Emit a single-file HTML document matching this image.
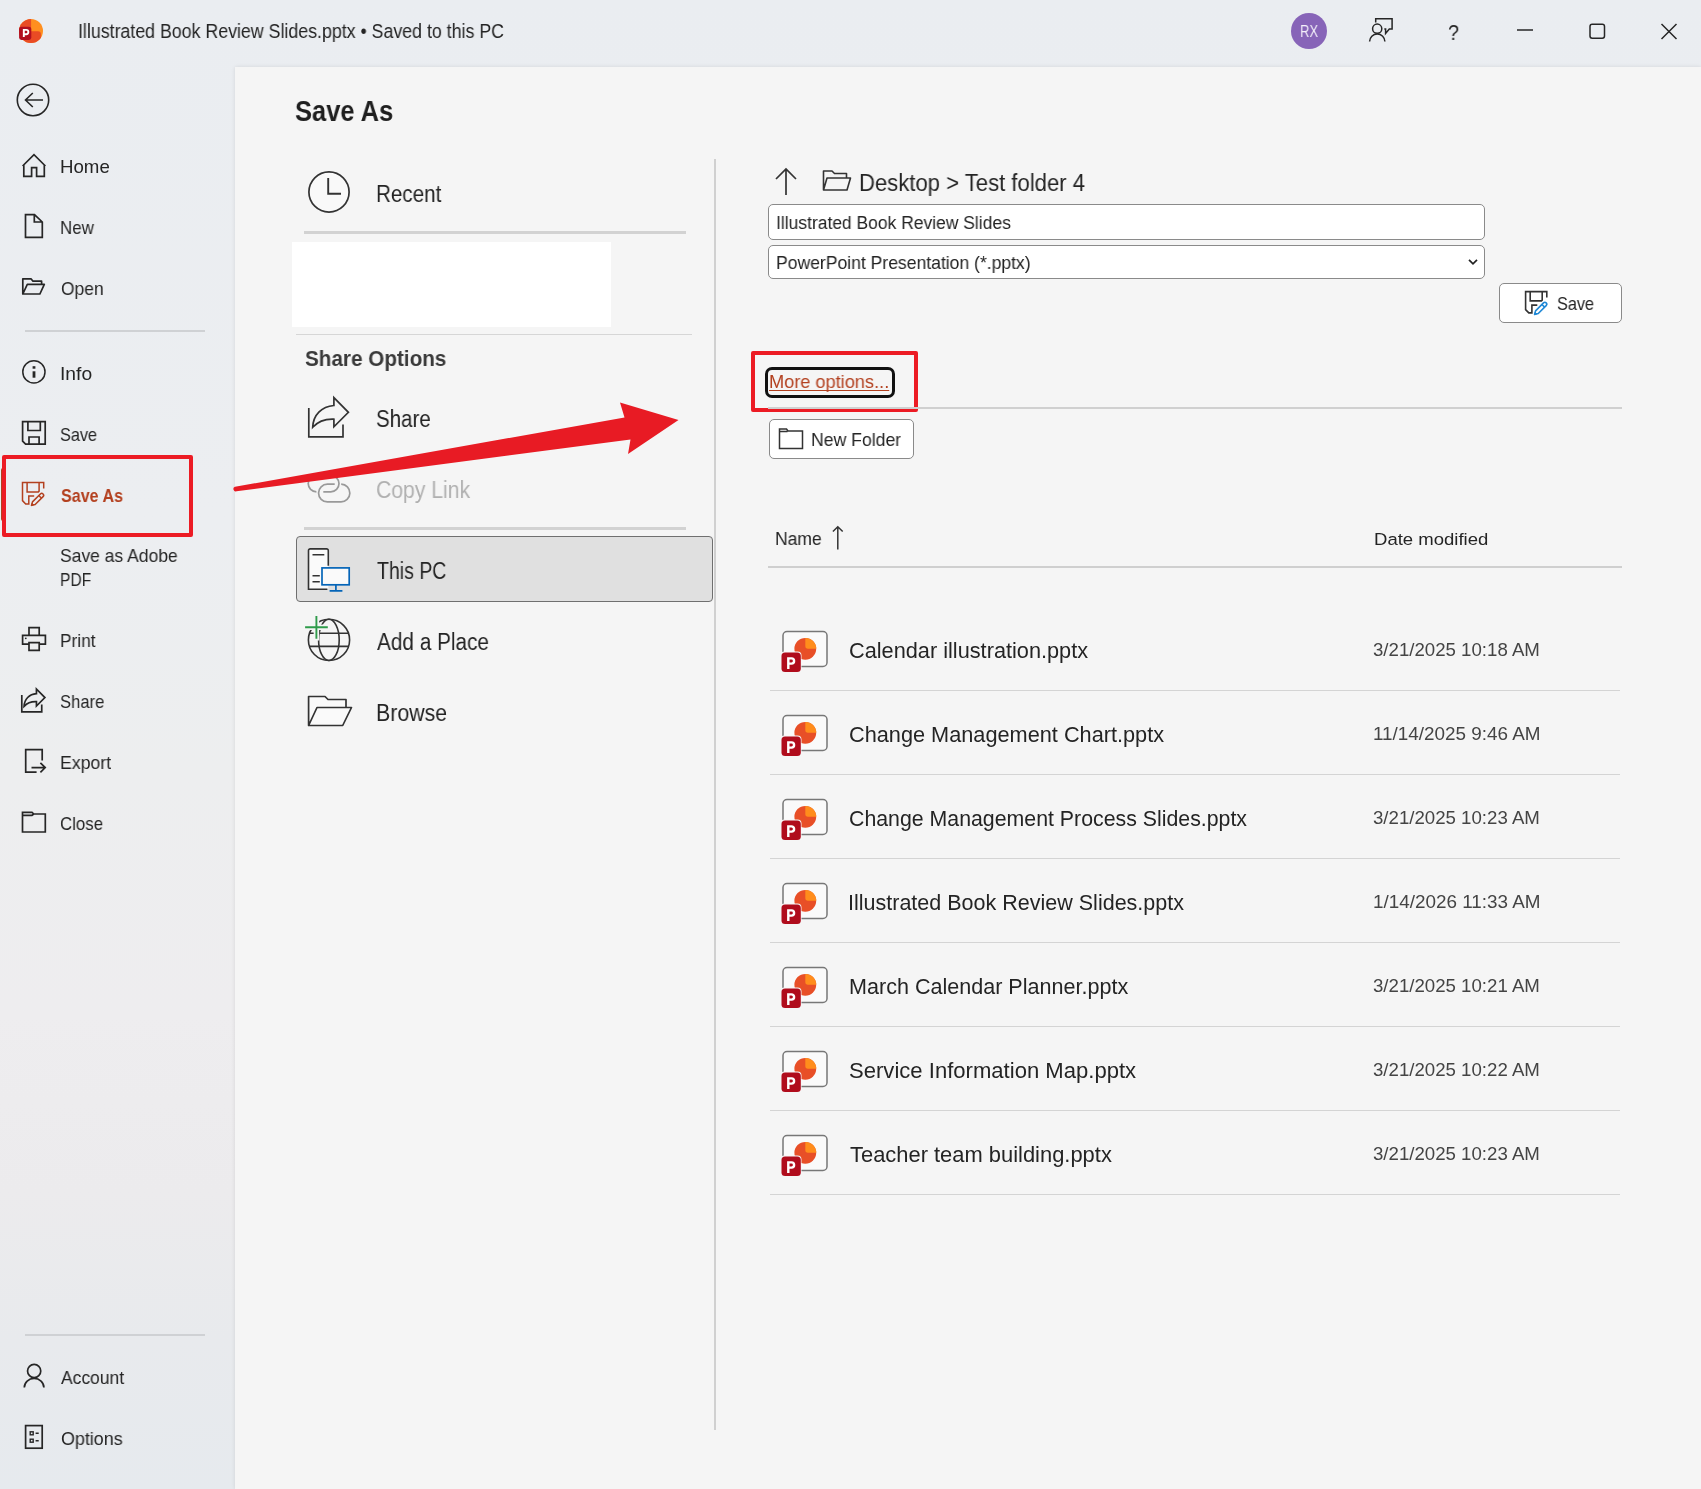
<!DOCTYPE html>
<html><head><meta charset="utf-8"><style>
html,body{margin:0;padding:0;width:1701px;height:1489px;overflow:hidden;background:#eceef1}
body{position:relative;font-family:"Liberation Sans", sans-serif}
.t{position:absolute;white-space:nowrap;line-height:1;transform-origin:0 0;will-change:transform}
.r{position:absolute}
.i{position:absolute;overflow:visible}
</style></head><body>
<div style="position:absolute;left:0;top:0;width:1701px;height:1489px;background:linear-gradient(180deg,#eaedf1 0%,#eceef1 35%,#edeeef 52%,#eeedef 68%,#ecebed 80%,#e8eaed 90%,#e6eaee 100%)"></div>
<div style="position:absolute;left:235px;top:67px;width:1466px;height:1422px;background:#f5f5f5;box-shadow:0 0 4px rgba(0,0,0,0.10)"></div>
<svg class="i" style="left:17px;top:17px;" width="28" height="28" viewBox="17 17 28 28">
<clipPath id="lc"><circle cx="31" cy="31" r="12"/></clipPath>
<g clip-path="url(#lc)">
<rect x="19" y="19" width="24" height="24" fill="#ff8f1f"/>
<path d="M17 17 H28.3 A2.8 2.8 0 0 1 31.1 19.8 V33 H17 Z" fill="#e94b24"/>
<path d="M17 31.2 H38 A2.9 2.9 0 0 1 40.9 34.1 V45 H17 Z" fill="#e94b24"/>
</g>
<rect x="19.1" y="26.7" width="12.2" height="13.2" rx="2.4" fill="#b10e1f"/>
<path d="M23.8 37 V29.9 H26.2 A2.15 2.15 0 0 1 26.2 34.2 H23.8" fill="none" stroke="#fff" stroke-width="1.9"/>
</svg>
<div style="position:absolute;left:1291px;top:13px;width:36px;height:36px;border-radius:50%;background:#8764b8"></div>
<svg class="i" style="left:1360px;top:12px;" width="40" height="36" viewBox="1360 12 40 36"><g fill="none" stroke="#262626" stroke-width="1.5"><path d="M1375.7 22.6 V18.8 H1392.1 V29 H1389.3 L1385.6 33.4 V29 H1384.3"/><circle cx="1377.2" cy="28.7" r="4.6"/><path d="M1369.6 41.6 A7.65 7.65 0 0 1 1384.9 41.6"/></g></svg>
<svg class="i" style="left:1510px;top:20px;" width="30" height="20" viewBox="1510 20 30 20"><path d="M1517 30 H1533" stroke="#262626" stroke-width="1.5"/></svg>
<svg class="i" style="left:1585px;top:20px;" width="25" height="24" viewBox="1585 20 25 24"><rect x="1590" y="24.2" width="14.5" height="14" rx="2.2" fill="none" stroke="#262626" stroke-width="1.5"/></svg>
<svg class="i" style="left:1655px;top:18px;" width="28" height="26" viewBox="1655 18 28 26"><path d="M1661.5 24 L1676.5 39 M1676.5 24 L1661.5 39" stroke="#262626" stroke-width="1.5"/></svg>
<svg class="i" style="left:14px;top:80px;" width="40" height="40" viewBox="14 80 40 40"><circle cx="33" cy="100" r="15.7" fill="none" stroke="#262626" stroke-width="1.6"/><path d="M43 100 H25.5 M32.8 93 L25.5 100 L32.8 107" fill="none" stroke="#262626" stroke-width="1.6"/></svg>
<svg class="i" style="left:18px;top:150px;" width="32" height="32" viewBox="18 150 32 32"><path d="M22.6 166 L34 154.6 L45.4 166 M23.8 164.5 V176.3 H31.6 V167.6 H36.6 V176.3 H44.3 V164.5" fill="none" stroke="#262626" stroke-width="1.7" stroke-linejoin="miter"/></svg>
<svg class="i" style="left:20px;top:210px;" width="28" height="32" viewBox="20 210 28 32"><path d="M25.5 214.6 H34.5 L42.3 222 V237.3 H25.5 Z M34.3 214.6 V222 H42.3" fill="none" stroke="#262626" stroke-width="1.7"/></svg>
<svg class="i" style="left:18px;top:274px;" width="32" height="26" viewBox="18 274 32 26"><path d="M22.8 294 V278.8 H31 L33 281.2 H41.6 V284.3 M22.8 294 L27.3 284.3 H44.3 L39.9 294 Z" fill="none" stroke="#262626" stroke-width="1.7" stroke-linejoin="round"/></svg>
<svg class="i" style="left:18px;top:356px;" width="32" height="32" viewBox="18 356 32 32"><circle cx="33.9" cy="371.9" r="11.1" fill="none" stroke="#262626" stroke-width="1.5"/><rect x="32.6" y="371.3" width="2.8" height="6.4" fill="#262626"/><rect x="32.6" y="366.2" width="2.8" height="2.5" fill="#262626"/></svg>
<svg class="i" style="left:18px;top:417px;" width="32" height="32" viewBox="18 417 32 32"><path d="M22.6 421.6 H45.2 V444.2 H25.6 L22.6 441.2 Z M27.9 421.6 V430.5 H40.3 V421.6 M29 444.2 V437 H39.1 V444.2" fill="none" stroke="#262626" stroke-width="1.7"/></svg>
<svg class="i" style="left:18px;top:478px;" width="32" height="32" viewBox="18 478 32 32"><g transform="translate(22.5 482.6)" fill="none" stroke-width="1.5"><path d="M21.2 6 V0 H0 V18 L3.2 21.3 H6.3 V13.5 H11.7 M4.6 0 V9.3 H15.8 L16.6 8.5 V0" stroke="#b3401f"/><g transform="translate(8.9 23) rotate(-45)"><path d="M0.2 -0.1 L3.4 -1.9 H14.6 A1.9 1.9 0 0 1 14.6 1.9 H3.4 Z" stroke="#b3401f" fill="none" stroke-linejoin="round"/><path d="M12.4 -1.9 V1.9" stroke="#b3401f"/><path d="M0 0 L2.2 -1.2 V1.2 Z" fill="#b3401f" stroke="#b3401f" stroke-width="0.8"/></g></g></svg>
<svg class="i" style="left:18px;top:622px;" width="32" height="34" viewBox="18 622 32 34"><path d="M29 635.3 V627.6 H39.2 V635.3 M29 644.1 H22.6 V635.3 H45.4 V644.1 H39.2 M29 642.6 H39.2 V650.3 H29 Z" fill="none" stroke="#262626" stroke-width="1.7"/><circle cx="25.8" cy="638.3" r="0.9" fill="#262626"/></svg>
<svg class="i" style="left:18px;top:684px;" width="32" height="32" viewBox="18 684 32 32"><g transform="translate(21.8 689) scale(0.583) translate(-308.8 -397.6)"><path d="M308.8 408 V436.9 H343 V424.4 M333.9 405.5 V397.6 L348.4 412.3 L333.9 426.8 V419.2 C325 418.8 318 421.5 312.7 427.3 C313.2 415 321.5 406.5 333.9 405.5 Z" fill="none" stroke="#262626" stroke-width="1.7" vector-effect="non-scaling-stroke"/></g></svg>
<svg class="i" style="left:18px;top:745px;" width="32" height="32" viewBox="18 745 32 32"><path d="M42.2 760.6 V749.6 H25.7 V772.2 H36.6 M31.5 767.6 H45.2 M40.4 762.9 L45.2 767.6 L40.4 772.3" fill="none" stroke="#262626" stroke-width="1.7"/></svg>
<svg class="i" style="left:18px;top:806px;" width="32" height="32" viewBox="18 806 32 32"><path d="M22.5 832 V812.3 H32 L33.8 814 H45.3 V832 Z M22.5 815.3 H32 L33.8 814" fill="none" stroke="#262626" stroke-width="1.7"/></svg>
<svg class="i" style="left:18px;top:1360px;" width="32" height="32" viewBox="18 1360 32 32"><circle cx="34.15" cy="1371.05" r="6.6" fill="none" stroke="#262626" stroke-width="1.7"/><path d="M24.3 1387.6 A9.8 9.2 0 0 1 43.9 1387.6" fill="none" stroke="#262626" stroke-width="1.7"/></svg>
<svg class="i" style="left:18px;top:1420px;" width="32" height="34" viewBox="18 1420 32 34"><rect x="25.6" y="1425.6" width="16.6" height="22.6" fill="none" stroke="#262626" stroke-width="1.7"/><rect x="30.2" y="1431.8" width="3" height="3" fill="none" stroke="#262626" stroke-width="1.4"/><rect x="30.2" y="1439.2" width="3" height="3" fill="none" stroke="#262626" stroke-width="1.4"/><path d="M35.6 1433.3 H38.7 M35.6 1440.7 H38.7" stroke="#262626" stroke-width="1.4"/></svg>
<div class="r" style="left:25px;top:330px;width:180px;height:2px;background:#cfd1d4"></div>
<div class="r" style="left:25px;top:1334px;width:180px;height:2px;background:#cfd1d4"></div>
<div class="r" style="left:1px;top:468px;width:4px;height:53px;background:#b3401f;border-radius:2px"></div>
<div class="r" style="left:2px;top:455px;width:183px;height:74px;border:4px solid #ec1b24;border-radius:2px"></div>
<svg class="i" style="left:300px;top:163px;" width="60" height="60" viewBox="300 163 60 60"><circle cx="329" cy="192" r="20.1" fill="#f9f9f9" stroke="#333" stroke-width="1.7"/><path d="M328.2 178 V193.8 H341" fill="none" stroke="#333" stroke-width="1.9"/></svg>
<div class="r" style="left:304px;top:231px;width:382px;height:3px;background:#d2d2d2"></div>
<div class="r" style="left:292px;top:242px;width:319px;height:85px;background:#ffffff"></div>
<div class="r" style="left:296px;top:334px;width:396px;height:1px;background:#d6d6d6"></div>
<svg class="i" style="left:300px;top:390px;" width="60" height="54" viewBox="300 390 60 54"><path d="M308.8 408 V436.9 H343 V424.4 M333.9 405.5 V397.6 L348.4 412.3 L333.9 426.8 V419.2 C325 418.8 318 421.5 312.7 427.3 C313.2 415 321.5 406.5 333.9 405.5 Z" fill="none" stroke="#333" stroke-width="1.7" stroke-linejoin="miter"/></svg>
<svg class="i" style="left:300px;top:470px;" width="60" height="40" viewBox="300 470 60 40"><g fill="none" stroke="#999" stroke-width="1.7"><path d="M323.3 491.8 H330.8 A8.2 8.2 0 0 0 330.8 475.4 H316.4 A8.2 8.2 0 0 0 316.4 491.8"/><path d="M341.2 484.2 A8.85 8.85 0 0 1 340.8 501.9 H327.4 A8.85 8.85 0 0 1 327.4 484.2 H334.7"/></g></svg>
<div class="r" style="left:304px;top:526.5px;width:382px;height:3px;background:#d2d2d2"></div>
<div class="r" style="left:296.3px;top:536.2px;width:416.5px;height:65.5px;box-sizing:border-box;background:#e0e0e0;border:1px solid #6f6f6f;border-radius:4px"></div>
<svg class="i" style="left:300px;top:540px;" width="60" height="60" viewBox="300 540 60 60"><rect x="308.5" y="548.9" width="19.8" height="40.3" fill="#fafafa"/><path d="M328.3 565.8 V550.6 A1.7 1.7 0 0 0 326.6 548.9 H310.2 A1.7 1.7 0 0 0 308.5 550.6 V589.2 H327.4" fill="none" stroke="#333" stroke-width="1.6"/><path d="M312.5 554.7 H324.3 M312.5 575.7 H319.8 M312.5 581.7 H319.8" stroke="#333" stroke-width="1.5"/><rect x="322" y="567.9" width="27.2" height="16.9" fill="#fafafa" stroke="#0565b8" stroke-width="1.7"/><path d="M335.9 584.8 V590.8 M329.6 590.8 H342.4" stroke="#0565b8" stroke-width="1.7"/></svg>
<svg class="i" style="left:300px;top:612px;" width="60" height="54" viewBox="300 612 60 54"><g fill="none" stroke="#333" stroke-width="1.6"><circle cx="329" cy="639.9" r="20.6"/><ellipse cx="328.9" cy="639.9" rx="10.3" ry="20.6"/><path d="M309.5 633.3 H348.5 M309.5 646.4 H348.5"/></g><path d="M316.4 614.5 V640.5 M303 627.2 H330" stroke="#f5f5f5" stroke-width="5.5"/><path d="M316.4 616.1 V638.7 M305.1 627.2 H327.8" stroke="#2e9b4a" stroke-width="1.9"/></svg>
<svg class="i" style="left:300px;top:690px;" width="60" height="40" viewBox="300 690 60 40"><path d="M308.6 725.5 V696.5 H325 L328 699.5 H346 V707.5 H316.5 Z" fill="#fafafa" stroke="none"/><path d="M308.6 725.5 V696.5 H325 L328 699.5 H346 V707 M308.6 725.5 L317 707.5 H351.5 L342.7 725.5 Z" fill="#fafafa" stroke="#333" stroke-width="1.7" stroke-linejoin="round"/></svg>
<div class="r" style="left:714px;top:159px;width:2px;height:1271px;background:#d0d0d0"></div>
<svg class="i" style="left:770px;top:162px;" width="32" height="36" viewBox="770 162 32 36"><path d="M786 195 V169 M776 179 L786 169 L796 179" fill="none" stroke="#333" stroke-width="1.7"/></svg>
<svg class="i" style="left:818px;top:166px;" width="38" height="28" viewBox="818 166 38 28"><path d="M823.5 190 V171 H832 L834.5 173.5 H846.5 V178 M823.5 190 L827 178 H850.5 L847 190 Z" fill="none" stroke="#333" stroke-width="1.6" stroke-linejoin="round"/></svg>
<div class="r" style="left:768px;top:203.5px;width:717px;height:36.5px;background:#fff;border:1px solid #8a8a8a;border-radius:5px;box-sizing:border-box"></div>
<div class="r" style="left:768px;top:245px;width:717px;height:33.5px;background:#fff;border:1px solid #8a8a8a;border-radius:5px;box-sizing:border-box"></div>
<svg class="i" style="left:1465px;top:255px;" width="16" height="14" viewBox="1465 255 16 14"><path d="M1469 259.8 L1473 263.8 L1477 259.8" fill="none" stroke="#222" stroke-width="1.7"/></svg>
<div class="r" style="left:1499px;top:283px;width:123px;height:40px;background:#fff;border:1px solid #8a8a8a;border-radius:5px;box-sizing:border-box"></div>
<svg class="i" style="left:1520px;top:286px;" width="36" height="34" viewBox="1520 286 36 34"><g transform="translate(1525.6 291.6)" fill="none" stroke-width="1.6"><path d="M21.2 6 V0 H0 V18 L3.2 21.3 H6.3 V13.5 H11.7 M4.6 0 V9.3 H15.8 L16.6 8.5 V0" stroke="#333"/><g transform="translate(8.9 23) rotate(-45)"><path d="M0.2 -0.1 L3.4 -1.9 H14.6 A1.9 1.9 0 0 1 14.6 1.9 H3.4 Z" stroke="#1f88d6" fill="#ffffff" stroke-linejoin="round"/><path d="M12.4 -1.9 V1.9" stroke="#1f88d6"/><path d="M0 0 L2.2 -1.2 V1.2 Z" fill="#1f88d6" stroke="#1f88d6" stroke-width="0.8"/></g></g></svg>
<div class="r" style="left:751px;top:351px;width:167px;height:61px;border:4px solid #ec1b24;box-sizing:border-box;border-radius:2px"></div>
<div class="r" style="left:765px;top:367px;width:130px;height:30.5px;border:3px solid #111;box-sizing:border-box;border-radius:7px"></div>
<div class="r" style="left:768px;top:406.5px;width:854px;height:2px;background:#d0d0d0"></div>
<div class="r" style="left:768.5px;top:419px;width:145px;height:39.5px;background:#fff;border:1px solid #8a8a8a;border-radius:5px;box-sizing:border-box"></div>
<svg class="i" style="left:775px;top:424px;" width="32" height="30" viewBox="775 424 32 30"><path d="M779.5 448.5 V429 H786.5 L788 431 H802.5 V448.5 Z M779.5 431.5 H787.5" fill="none" stroke="#333" stroke-width="1.5"/></svg>
<svg class="i" style="left:830px;top:525px;" width="16" height="28" viewBox="830 525 16 28"><path d="M837.8 549.5 V526.8 M832.9 531.5 L837.8 526.8 L842.7 531.5" fill="none" stroke="#333" stroke-width="1.5"/></svg>
<div class="r" style="left:768px;top:565.5px;width:854px;height:2px;background:#cfcfcf"></div>
<svg class="i" style="left:778px;top:627px;" width="54" height="48" viewBox="778 627 54 48"><rect x="783" y="631.5" width="44" height="35" rx="4" fill="#fafafa" stroke="#777" stroke-width="1.5"/><circle cx="805.3" cy="648.8" r="10.9" fill="#e84f27"/><path d="M805.3 637.9 A10.9 10.9 0 0 1 816.2 648.8 H808 A2.7 2.7 0 0 1 805.3 646.1 Z" fill="#ff8d1c"/><rect x="780.5" y="651.5" width="21" height="21" rx="4" fill="#f5f5f5"/><rect x="781.5" y="652.5" width="19.3" height="19.6" rx="3.6" fill="#b00c1c"/><path d="M788.3 669 V658.4 H791.5 A2.6 2.6 0 0 1 791.5 663.6 H788.3" fill="none" stroke="#fff" stroke-width="2.4"/></svg>
<div class="r" style="left:770px;top:690px;width:850px;height:1px;background:#d4d4d4"></div>
<svg class="i" style="left:778px;top:711px;" width="54" height="48" viewBox="778 711 54 48"><rect x="783" y="715.5" width="44" height="35" rx="4" fill="#fafafa" stroke="#777" stroke-width="1.5"/><circle cx="805.3" cy="732.8" r="10.9" fill="#e84f27"/><path d="M805.3 721.9 A10.9 10.9 0 0 1 816.2 732.8 H808 A2.7 2.7 0 0 1 805.3 730.1 Z" fill="#ff8d1c"/><rect x="780.5" y="735.5" width="21" height="21" rx="4" fill="#f5f5f5"/><rect x="781.5" y="736.5" width="19.3" height="19.6" rx="3.6" fill="#b00c1c"/><path d="M788.3 753 V742.4 H791.5 A2.6 2.6 0 0 1 791.5 747.6 H788.3" fill="none" stroke="#fff" stroke-width="2.4"/></svg>
<div class="r" style="left:770px;top:774px;width:850px;height:1px;background:#d4d4d4"></div>
<svg class="i" style="left:778px;top:795px;" width="54" height="48" viewBox="778 795 54 48"><rect x="783" y="799.5" width="44" height="35" rx="4" fill="#fafafa" stroke="#777" stroke-width="1.5"/><circle cx="805.3" cy="816.8" r="10.9" fill="#e84f27"/><path d="M805.3 805.9 A10.9 10.9 0 0 1 816.2 816.8 H808 A2.7 2.7 0 0 1 805.3 814.1 Z" fill="#ff8d1c"/><rect x="780.5" y="819.5" width="21" height="21" rx="4" fill="#f5f5f5"/><rect x="781.5" y="820.5" width="19.3" height="19.6" rx="3.6" fill="#b00c1c"/><path d="M788.3 837 V826.4 H791.5 A2.6 2.6 0 0 1 791.5 831.6 H788.3" fill="none" stroke="#fff" stroke-width="2.4"/></svg>
<div class="r" style="left:770px;top:858px;width:850px;height:1px;background:#d4d4d4"></div>
<svg class="i" style="left:778px;top:879px;" width="54" height="48" viewBox="778 879 54 48"><rect x="783" y="883.5" width="44" height="35" rx="4" fill="#fafafa" stroke="#777" stroke-width="1.5"/><circle cx="805.3" cy="900.8" r="10.9" fill="#e84f27"/><path d="M805.3 889.9 A10.9 10.9 0 0 1 816.2 900.8 H808 A2.7 2.7 0 0 1 805.3 898.1 Z" fill="#ff8d1c"/><rect x="780.5" y="903.5" width="21" height="21" rx="4" fill="#f5f5f5"/><rect x="781.5" y="904.5" width="19.3" height="19.6" rx="3.6" fill="#b00c1c"/><path d="M788.3 921 V910.4 H791.5 A2.6 2.6 0 0 1 791.5 915.6 H788.3" fill="none" stroke="#fff" stroke-width="2.4"/></svg>
<div class="r" style="left:770px;top:942px;width:850px;height:1px;background:#d4d4d4"></div>
<svg class="i" style="left:778px;top:963px;" width="54" height="48" viewBox="778 963 54 48"><rect x="783" y="967.5" width="44" height="35" rx="4" fill="#fafafa" stroke="#777" stroke-width="1.5"/><circle cx="805.3" cy="984.8" r="10.9" fill="#e84f27"/><path d="M805.3 973.9 A10.9 10.9 0 0 1 816.2 984.8 H808 A2.7 2.7 0 0 1 805.3 982.1 Z" fill="#ff8d1c"/><rect x="780.5" y="987.5" width="21" height="21" rx="4" fill="#f5f5f5"/><rect x="781.5" y="988.5" width="19.3" height="19.6" rx="3.6" fill="#b00c1c"/><path d="M788.3 1005 V994.4 H791.5 A2.6 2.6 0 0 1 791.5 999.6 H788.3" fill="none" stroke="#fff" stroke-width="2.4"/></svg>
<div class="r" style="left:770px;top:1026px;width:850px;height:1px;background:#d4d4d4"></div>
<svg class="i" style="left:778px;top:1047px;" width="54" height="48" viewBox="778 1047 54 48"><rect x="783" y="1051.5" width="44" height="35" rx="4" fill="#fafafa" stroke="#777" stroke-width="1.5"/><circle cx="805.3" cy="1068.8" r="10.9" fill="#e84f27"/><path d="M805.3 1057.9 A10.9 10.9 0 0 1 816.2 1068.8 H808 A2.7 2.7 0 0 1 805.3 1066.1 Z" fill="#ff8d1c"/><rect x="780.5" y="1071.5" width="21" height="21" rx="4" fill="#f5f5f5"/><rect x="781.5" y="1072.5" width="19.3" height="19.6" rx="3.6" fill="#b00c1c"/><path d="M788.3 1089 V1078.4 H791.5 A2.6 2.6 0 0 1 791.5 1083.6 H788.3" fill="none" stroke="#fff" stroke-width="2.4"/></svg>
<div class="r" style="left:770px;top:1110px;width:850px;height:1px;background:#d4d4d4"></div>
<svg class="i" style="left:778px;top:1131px;" width="54" height="48" viewBox="778 1131 54 48"><rect x="783" y="1135.5" width="44" height="35" rx="4" fill="#fafafa" stroke="#777" stroke-width="1.5"/><circle cx="805.3" cy="1152.8" r="10.9" fill="#e84f27"/><path d="M805.3 1141.9 A10.9 10.9 0 0 1 816.2 1152.8 H808 A2.7 2.7 0 0 1 805.3 1150.1 Z" fill="#ff8d1c"/><rect x="780.5" y="1155.5" width="21" height="21" rx="4" fill="#f5f5f5"/><rect x="781.5" y="1156.5" width="19.3" height="19.6" rx="3.6" fill="#b00c1c"/><path d="M788.3 1173 V1162.4 H791.5 A2.6 2.6 0 0 1 791.5 1167.6 H788.3" fill="none" stroke="#fff" stroke-width="2.4"/></svg>
<div class="r" style="left:770px;top:1194px;width:850px;height:1px;background:#d4d4d4"></div>
<svg class="i" style="left:0;top:0" width="1701" height="1489"><path d="M235 486.8 L624.5 417.5 L620 402.6 L678.5 420 L628 454 L630.5 439.5 L236.5 491.2 A2.2 2.2 0 0 1 235 486.8 Z" fill="#e81b24"/></svg>
<div class="t" id="title" style="left:78.00px;top:22.36px;font-size:19.3px;font-weight:400;color:#242424;transform:scaleX(0.9216);">Illustrated Book Review Slides.pptx • Saved to this PC</div>
<div class="t" id="rx" style="left:1299.80px;top:24.02px;font-size:15.92px;font-weight:400;color:#f4f0fa;transform:scaleX(0.8200);">RX</div>
<div class="t" id="home" style="left:60.00px;top:158.08px;font-size:18.34px;font-weight:400;color:#242424;transform:scaleX(1.0181);">Home</div>
<div class="t" id="new" style="left:60.00px;top:219.18px;font-size:18.34px;font-weight:400;color:#242424;transform:scaleX(0.9232);">New</div>
<div class="t" id="open" style="left:61.00px;top:279.98px;font-size:18.34px;font-weight:400;color:#242424;transform:scaleX(0.9489);">Open</div>
<div class="t" id="info" style="left:60.00px;top:365.18px;font-size:18.34px;font-weight:400;color:#242424;transform:scaleX(1.0496);">Info</div>
<div class="t" id="save" style="left:60.00px;top:425.68px;font-size:18.34px;font-weight:400;color:#242424;transform:scaleX(0.8864);">Save</div>
<div class="t" id="saveas" style="left:61.00px;top:486.98px;font-size:18.34px;font-weight:700;color:#b3401f;transform:scaleX(0.8777);">Save As</div>
<div class="t" id="adobe" style="left:60.00px;top:546.58px;font-size:18.34px;font-weight:400;color:#242424;transform:scaleX(0.9549);">Save as Adobe</div>
<div class="t" id="pdf" style="left:60.00px;top:570.98px;font-size:18.34px;font-weight:400;color:#242424;transform:scaleX(0.8500);">PDF</div>
<div class="t" id="print" style="left:60.00px;top:632.18px;font-size:18.34px;font-weight:400;color:#242424;transform:scaleX(0.9438);">Print</div>
<div class="t" id="share" style="left:60.00px;top:693.28px;font-size:18.34px;font-weight:400;color:#242424;transform:scaleX(0.9063);">Share</div>
<div class="t" id="export" style="left:60.00px;top:753.98px;font-size:18.34px;font-weight:400;color:#242424;transform:scaleX(0.9645);">Export</div>
<div class="t" id="close" style="left:60.00px;top:815.18px;font-size:18.34px;font-weight:400;color:#242424;transform:scaleX(0.9182);">Close</div>
<div class="t" id="account" style="left:61.00px;top:1368.78px;font-size:18.34px;font-weight:400;color:#242424;transform:scaleX(0.9515);">Account</div>
<div class="t" id="options" style="left:61.00px;top:1429.58px;font-size:18.34px;font-weight:400;color:#242424;transform:scaleX(0.9764);">Options</div>
<div class="t" id="h1" style="left:295.00px;top:96.99px;font-size:28.95px;font-weight:700;color:#1f1f1f;transform:scaleX(0.8802);">Save As</div>
<div class="t" id="recent" style="left:375.50px;top:182.50px;font-size:23.16px;font-weight:400;color:#242424;transform:scaleX(0.8902);">Recent</div>
<div class="t" id="shareopts" style="left:304.50px;top:346.90px;font-size:22.68px;font-weight:700;color:#3a3a3a;transform:scaleX(0.9123);">Share Options</div>
<div class="t" id="share2" style="left:375.50px;top:408.20px;font-size:23.16px;font-weight:400;color:#242424;transform:scaleX(0.8853);">Share</div>
<div class="t" id="copylink" style="left:375.50px;top:479.30px;font-size:23.16px;font-weight:400;color:#b0b0b0;transform:scaleX(0.9134);">Copy Link</div>
<div class="t" id="thispc" style="left:376.50px;top:559.90px;font-size:23.16px;font-weight:400;color:#242424;transform:scaleX(0.8426);">This PC</div>
<div class="t" id="addplace" style="left:376.50px;top:630.90px;font-size:23.16px;font-weight:400;color:#242424;transform:scaleX(0.8964);">Add a Place</div>
<div class="t" id="browse" style="left:375.50px;top:701.50px;font-size:23.16px;font-weight:400;color:#242424;transform:scaleX(0.9213);">Browse</div>
<div class="t" id="path" style="left:858.90px;top:171.50px;font-size:23.16px;font-weight:400;color:#242424;transform:scaleX(0.9532);">Desktop > Test folder 4</div>
<div class="t" id="fname" style="left:775.50px;top:214.37px;font-size:18.82px;font-weight:400;color:#242424;transform:scaleX(0.9280);">Illustrated Book Review Slides</div>
<div class="t" id="ftype" style="left:775.50px;top:253.98px;font-size:18.34px;font-weight:400;color:#242424;transform:scaleX(0.9577);">PowerPoint Presentation (*.pptx)</div>
<div class="t" id="savebtn" style="left:1557.00px;top:295.18px;font-size:18.34px;font-weight:400;color:#242424;transform:scaleX(0.8864);">Save</div>
<div class="t" id="more" style="left:768.50px;top:372.98px;font-size:18.34px;font-weight:400;color:#b3401f;transform:scaleX(0.9915);text-decoration:underline;text-underline-offset:2px;text-decoration-thickness:1.2px;text-decoration-skip-ink:none;">More options...</div>
<div class="t" id="newfolder" style="left:811.10px;top:430.98px;font-size:18.34px;font-weight:400;color:#242424;transform:scaleX(0.9616);">New Folder</div>
<div class="t" id="hname" style="left:775.20px;top:530.42px;font-size:18.05px;font-weight:400;color:#242424;transform:scaleX(0.9710);">Name</div>
<div class="t" id="hdate" style="left:1373.50px;top:530.80px;font-size:17.37px;font-weight:400;color:#242424;transform:scaleX(1.0669);">Date modified</div>
<div class="t" id="f0" style="left:849.10px;top:640.33px;font-size:21.23px;font-weight:400;color:#242424;transform:scaleX(1.0238);">Calendar illustration.pptx</div>
<div class="t" id="d0" style="left:1373.10px;top:641.28px;font-size:18.34px;font-weight:400;color:#444444;transform:scaleX(1.0171);">3/21/2025 10:18 AM</div>
<div class="t" id="f1" style="left:849.10px;top:724.33px;font-size:21.23px;font-weight:400;color:#242424;transform:scaleX(1.0234);">Change Management Chart.pptx</div>
<div class="t" id="d1" style="left:1373.10px;top:725.28px;font-size:18.34px;font-weight:400;color:#444444;transform:scaleX(1.0290);">11/14/2025 9:46 AM</div>
<div class="t" id="f2" style="left:849.10px;top:808.33px;font-size:21.23px;font-weight:400;color:#242424;transform:scaleX(1.0043);">Change Management Process Slides.pptx</div>
<div class="t" id="d2" style="left:1373.10px;top:809.28px;font-size:18.34px;font-weight:400;color:#444444;transform:scaleX(1.0171);">3/21/2025 10:23 AM</div>
<div class="t" id="f3" style="left:847.90px;top:892.33px;font-size:21.23px;font-weight:400;color:#242424;transform:scaleX(1.0138);">Illustrated Book Review Slides.pptx</div>
<div class="t" id="d3" style="left:1373.10px;top:893.28px;font-size:18.34px;font-weight:400;color:#444444;transform:scaleX(1.0290);">1/14/2026 11:33 AM</div>
<div class="t" id="f4" style="left:849.10px;top:976.33px;font-size:21.23px;font-weight:400;color:#242424;transform:scaleX(1.0160);">March Calendar Planner.pptx</div>
<div class="t" id="d4" style="left:1373.10px;top:977.28px;font-size:18.34px;font-weight:400;color:#444444;transform:scaleX(1.0171);">3/21/2025 10:21 AM</div>
<div class="t" id="f5" style="left:849.10px;top:1060.33px;font-size:21.23px;font-weight:400;color:#242424;transform:scaleX(1.0405);">Service Information Map.pptx</div>
<div class="t" id="d5" style="left:1373.10px;top:1061.28px;font-size:18.34px;font-weight:400;color:#444444;transform:scaleX(1.0171);">3/21/2025 10:22 AM</div>
<div class="t" id="f6" style="left:850.10px;top:1144.33px;font-size:21.23px;font-weight:400;color:#242424;transform:scaleX(1.0325);">Teacher team building.pptx</div>
<div class="t" id="d6" style="left:1373.10px;top:1145.28px;font-size:18.34px;font-weight:400;color:#444444;transform:scaleX(1.0171);">3/21/2025 10:23 AM</div>
<div class="t" id="help" style="left:1448.20px;top:21.53px;font-size:21.23px;font-weight:400;color:#262626;transform:scaleX(0.9300);">?</div>
</body></html>
